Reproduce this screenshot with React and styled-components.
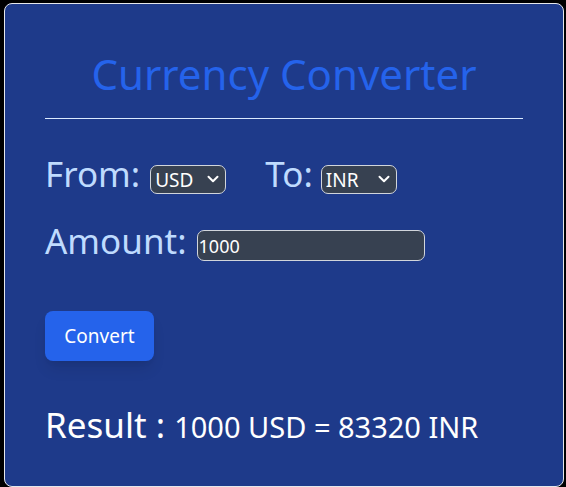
import React, { useState } from "react";
import styled, { createGlobalStyle } from "styled-components";

const Global = createGlobalStyle`
  html, body { margin: 0; padding: 0; background: #000; }
  body { font-family: "Noto Sans", "Open Sans", sans-serif; }
  * { box-sizing: border-box; }
`;

const Page = styled.div`
  padding: 3px 2px 0 4px;
  height: 487px;
  overflow: hidden;
`;

const Card = styled.div`
  background: #1e3a8a;
  border: 1px solid #e5e7eb;
  border-radius: 8px;
  height: 484px;
  padding: 42px 40px 0 40px;
`;

const Title = styled.h1`
  margin: 0;
  text-align: center;
  font-size: 42px;
  font-weight: 400;
  line-height: 56px;
  color: #2563eb;
`;

const Rule = styled.hr`
  margin: 16px 0 0;
  border: 0;
  border-top: 1px solid #dbeafe;
`;

const Row = styled.div`
  display: flex;
  align-items: flex-end;
  gap: ${(p) => p.$gap || 10}px;
  margin-top: ${(p) => p.$mt || 0}px;
`;

const Field = styled.div`
  display: flex;
  align-items: flex-end;
  gap: ${(p) => p.$gap || 10}px;
`;

const Label = styled.label`
  font-size: 35px;
  line-height: 40px;
  color: #bfdbfe;
`;

const SelectWrap = styled.div`
  position: relative;
  width: 76px;
  height: 29px;
`;

const Select = styled.select`
  appearance: none;
  -webkit-appearance: none;
  font-family: inherit;
  font-size: 19px;
  height: 29px;
  width: 76px;
  padding: 0 20px 0 4px;
  background: #374151;
  color: #fff;
  border: 1px solid #d1d5db;
  border-radius: 7px;
`;

const Chevron = styled.svg`
  position: absolute;
  right: 7px;
  top: 10px;
  width: 12px;
  height: 8px;
  pointer-events: none;
`;

const Input = styled.input`
  font-family: inherit;
  font-size: 18px;
  height: 31px;
  width: 228px;
  padding: 0 1px;
  background: #374151;
  color: #fff;
  border: 1px solid #d1d5db;
  border-radius: 7px;
`;

const Button = styled.button`
  margin-top: 50px;
  font-family: inherit;
  font-size: 19px;
  color: #fff;
  background: #2563eb;
  border: 0;
  border-radius: 8px;
  width: 109px;
  height: 50px;
  box-shadow: 0 10px 15px -3px rgba(0,0,0,0.1), 0 4px 6px -4px rgba(0,0,0,0.1);
`;

const Result = styled.div`
  margin-top: 44px;
  color: #fff;
  font-size: 35px;
  line-height: 40px;
`;

const ResultValue = styled.span`
  font-size: 29px;
`;

function CurrencySelect({ value, onChange, options }) {
  return (
    <SelectWrap>
      <Select value={value} onChange={onChange}>
        {options.map((o) => (
          <option key={o}>{o}</option>
        ))}
      </Select>
      <Chevron viewBox="0 0 12 8">
        <path d="M1.5 1.8 L6 6.2 L10.5 1.8" fill="none" stroke="#fff" strokeWidth="2" strokeLinecap="round" strokeLinejoin="round" />
      </Chevron>
    </SelectWrap>
  );
}

export default function App() {
  const [from, setFrom] = useState("USD");
  const [to, setTo] = useState("INR");
  const [amount, setAmount] = useState("1000");
  return (
    <Page>
      <Global />
      <Card>
        <Title>Currency Converter</Title>
        <Rule />
        <Row $gap={39} $mt={35}>
          <Field>
            <Label>From:</Label>
            <CurrencySelect value={from} onChange={(e) => setFrom(e.target.value)} options={["USD", "EUR", "INR"]} />
          </Field>
          <Field $gap={8}>
            <Label>To:</Label>
            <CurrencySelect value={to} onChange={(e) => setTo(e.target.value)} options={["INR", "USD", "EUR"]} />
          </Field>
        </Row>
        <Row $mt={27}>
          <Label>Amount:</Label>
          <Input value={amount} onChange={(e) => setAmount(e.target.value)} />
        </Row>
        <div>
          <Button>Convert</Button>
        </div>
        <Result>
          Result : <ResultValue>1000 USD = 83320 INR</ResultValue>
        </Result>
      </Card>
    </Page>
  );
}
